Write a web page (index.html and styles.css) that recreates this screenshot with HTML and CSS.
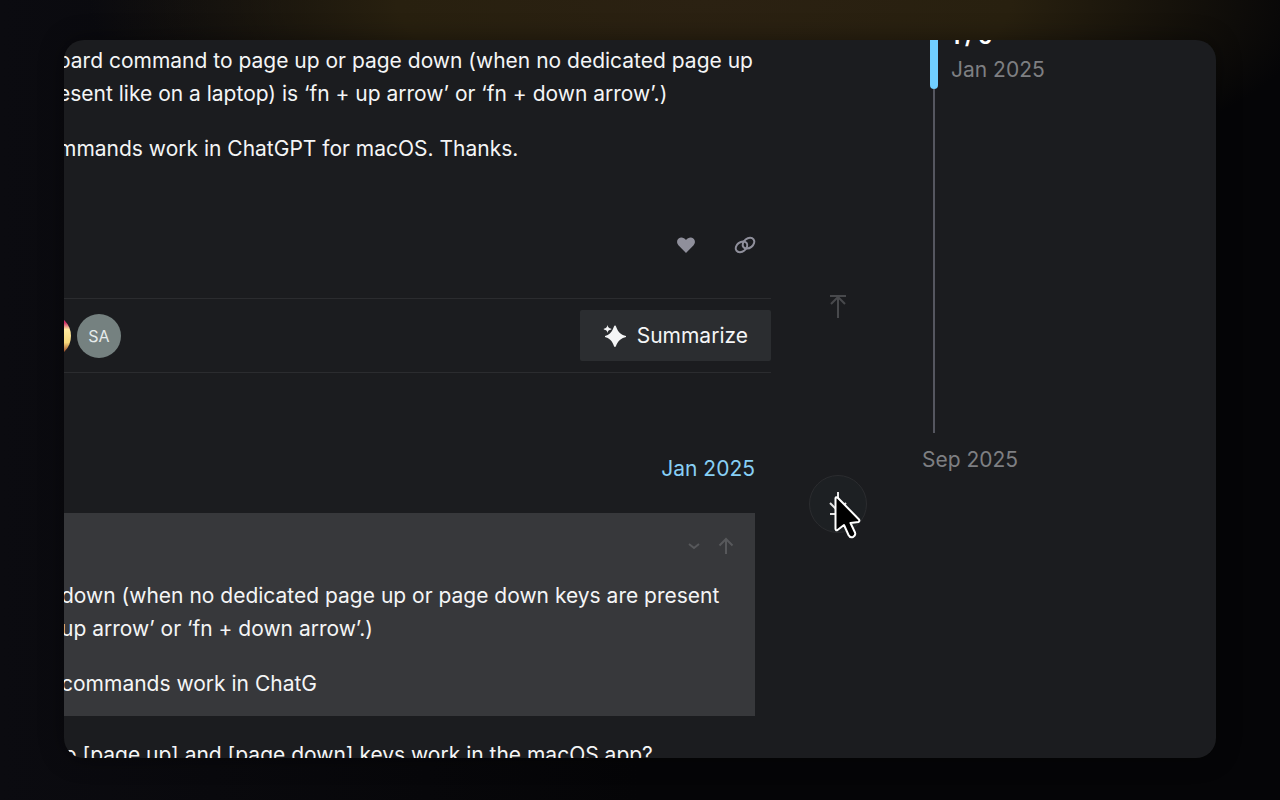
FILE: index.html
```html
<!DOCTYPE html>
<html lang="en">
<head>
    <meta charset="UTF-8">
    <meta name="viewport" content="width=device-width, initial-scale=1.0">
    <title>Page up and page down keys</title>
    <link rel="stylesheet" href="styles.css">
</head>
<body>

    <main class="window">
        <!-- Posts -->
        <section class="thread">
            <article class="post">
                <div class="post-text">
                    <p>oard command to page up or page down (when no dedicated page up<br>
                    esent like on a laptop) is ‘fn + up arrow’ or ‘fn + down arrow’.)</p>
                    <p>mmands work in ChatGPT for macOS. Thanks.</p>
                </div>
                <div class="post-actions">
                    <button class="icon-button" aria-label="Like">
                        <svg width="20" height="20" viewBox="0 0 20 20"><path fill="currentColor" d="M10 18 2.400 10.200C-.2 7.400 1.200 2.600 5 2.400c2.200-.1 3.800 1 5 2.600 1.200-1.600 2.800-2.700 5-2.600 3.800.2 5.200 5 2.600 7.800z"/></svg>
                    </button>
                    <button class="icon-button" aria-label="Copy link">
                        <svg width="22" height="22" viewBox="0 0 22 22" fill="none" stroke="currentColor" stroke-width="2"><ellipse cx="7.500" cy="12.800" rx="6.400" ry="4.700" transform="rotate(-38 7.500 12.800)"/><ellipse cx="14.500" cy="9.200" rx="6.400" ry="4.700" transform="rotate(-38 14.500 9.200)"/></svg>
                    </button>
                </div>
            </article>

            <div class="summary-bar">
                <div class="avatars">
                    <span class="avatar avatar-photo"></span>
                    <span class="avatar">SA</span>
                </div>
                <button class="summarize">
                    <svg width="24" height="24" viewBox="0 0 24 24" fill="currentColor"><path d="M12 1.500c1.800 0 1.500 8.500 11 10.500v1c-9.500 2-9.200 10-11 10S10.500 15 2 13v-1c8.500-2 8.200-10.500 10-10.500z"/><path d="M4.500 1c.5 2.500 1.200 3.200 3.800 3.700v.8C5.700 6 5 6.700 4.500 9 4 6.700 3.300 6 .8 5.500v-.8C3.300 4.200 4 3.500 4.500 1z"/></svg>
                    Summarize
                </button>
            </div>

            <article class="reply">
                <a class="reply-date" href="#">Jan 2025</a>
                <blockquote class="quote">
                    <div class="quote-controls">
                        <button class="quote-button" aria-label="Expand quote">
                            <svg width="16" height="16" viewBox="0 0 16 16"><path d="m3 6 5 4 5-4"/></svg>
                        </button>
                        <button class="quote-button" aria-label="Go to quoted post">
                            <svg width="18" height="18" viewBox="0 0 18 18"><path d="M9 17V2M2.500 8.500 9 2l6.500 6.500"/></svg>
                        </button>
                    </div>
                    <p>down (when no dedicated page up or page down keys are present<br>
                    up arrow’ or ‘fn + down arrow’.)</p>
                    <p>commands work in ChatG</p>
                </blockquote>
                <p class="reply-text">o [page up] and [page down] keys work in the macOS app?</p>
            </article>
        </section>

        <!-- Jump buttons -->
        <nav class="jump">
            <button class="jump-button" aria-label="Jump to top">
                <svg width="20" height="26" viewBox="0 0 20 26"><path d="M2 3h16M10 25V4M3 11l7-7 7 7"/></svg>
            </button>
            <button class="jump-button active" aria-label="Jump to bottom">
                <svg width="20" height="26" viewBox="0 0 20 26"><path d="M2 23h16M10 1v21M2 12l8 8 8-8"/></svg>
                <svg class="cursor" width="28" height="46" viewBox="0 0 28 46"><path d="M2.500 3v31q.5 2 2 1l6.500-5 4.500 10q1.500 3 4.500 2 3-1.500 2-4.500L17.500 28l8-1q1.500-1 .5-2.500L5 3q-2-1.500-2.500 0z"/></svg>
            </button>
        </nav>

        <!-- Timeline -->
        <aside class="timeline">
            <div class="timeline-current">
                <strong>1 / 6</strong>
                <span>Jan 2025</span>
            </div>
            <div class="timeline-track"></div>
            <span class="timeline-end">Sep 2025</span>
        </aside>
    </main>

</body>
</html>
```
FILE: styles.css
```css
* {
    box-sizing: border-box;
}

body {
    margin: 0;
    height: 100vh;
    padding: 40px 64px 42px;
    overflow: hidden;
    background: radial-gradient(ellipse 48% 26% at 55% 0, #2b2112 0%, #28200f 50%, transparent 100%), linear-gradient(90deg, #0b0b10, #050507 50%, #050507);
    font-family: Inter, "Liberation Sans", sans-serif;
    font-size: 21px;
    line-height: 33px;
    color: #f4f5f6;
}

p {
    margin: 0 0 22px;
    white-space: nowrap;
}

button {
    font: inherit;
    color: inherit;
    padding: 0;
    border: none;
    background: none;
    cursor: pointer;
}

.window {
    display: flex;
    height: 100%;
    overflow: hidden;
    border-radius: 20px;
    background-color: #1b1c1f;
    box-shadow: 0 0 24px rgba(0, 0, 0, 0.4);
}

.thread {
    flex: 1;
    min-width: 0;
}

.post {
    padding-top: 4px;
}

.post-text {
    margin-left: -6px;
}

.post-actions {
    display: flex;
    justify-content: flex-end;
    align-items: center;
    gap: 38px;
    height: 72px;
    margin-top: 44px;
    margin-bottom: 17px;
    padding-right: 15px;
}

.icon-button {
    display: flex;
    color: #8f8f9b;
}

.summary-bar {
    display: flex;
    justify-content: space-between;
    align-items: center;
    height: 75px;
    border-top: 1px solid #2b2c2f;
    border-bottom: 1px solid #2b2c2f;
}

.avatars {
    display: flex;
    gap: 6px;
    margin-left: -37px;
}

.avatar {
    width: 44px;
    height: 44px;
    border-radius: 50%;
    background-color: #758180;
    color: #e6ebeb;
    font-size: 16px;
    line-height: 44px;
    text-align: center;
}

.avatar-photo {
    background: linear-gradient(#d0306a 20%, #ffeaa0 35%, #f6d77a 65%, #a0522d 85%);
}

.summarize {
    display: flex;
    align-items: center;
    gap: 10px;
    height: 51px;
    padding: 0 23px;
    background-color: #2b2d30;
    border-radius: 2px;
}

.reply {
    padding: 79px 16px 0 0;
}

.reply-date {
    display: block;
    text-align: right;
    color: #88cff5;
    text-decoration: none;
}

.quote {
    margin: 28px 0 22px;
    padding: 16px 0;
    background-color: #37383b;
}

.quote p {
    margin-left: -3px;
}

.quote p:last-child {
    margin-bottom: 0;
}

.quote-controls {
    display: flex;
    justify-content: flex-end;
    align-items: center;
    gap: 15px;
    height: 34px;
    margin-bottom: 16px;
    padding-right: 20px;
}

.quote-button {
    display: flex;
}

.quote-button path {
    fill: none;
    stroke: #57585b;
    stroke-width: 2;
}

.jump {
    display: flex;
    flex-direction: column;
    align-items: center;
    gap: 140px;
    width: 134px;
    padding-top: 237px;
}

.jump-button {
    position: relative;
    display: flex;
    align-items: center;
    justify-content: center;
    width: 58px;
    height: 58px;
    border: 1px solid transparent;
    border-radius: 50%;
}

.jump-button path {
    fill: none;
    stroke: #48494c;
    stroke-width: 2;
}

.jump-button.active {
    border-color: #2b2c2f;
    background-color: #1d2023;
}

.jump-button.active path {
    stroke: #e6e6e6;
}

.jump-button .cursor {
    position: absolute;
    left: 23px;
    top: 19px;
}

.jump-button.active .cursor path {
    fill: #000;
    stroke: #fff;
    stroke-width: 2;
    stroke-linejoin: round;
}

.timeline {
    width: 311px;
    padding-left: 17px;
    color: #7e7f82;
}

.timeline-current {
    display: flex;
    height: 49px;
    flex-direction: column;
    justify-content: flex-end;
    position: relative;
    margin-left: 8px;
    padding-left: 21px;
    padding-bottom: 3px;
}

/* Scroll handle */
.timeline-current::before {
    content: "";
    position: absolute;
    left: 0;
    top: 0;
    width: 8px;
    height: 100%;
    border-radius: 0 0 4px 4px;
    background-color: #71cfff;
}

.timeline-current strong {
    color: #fff;
    font-weight: 700;
}

.timeline-track {
    height: 344px;
    margin-left: 11px;
    border-left: 2px solid #55565f;
}

.timeline-end {
    display: block;
    margin-top: 10px;
}
```
